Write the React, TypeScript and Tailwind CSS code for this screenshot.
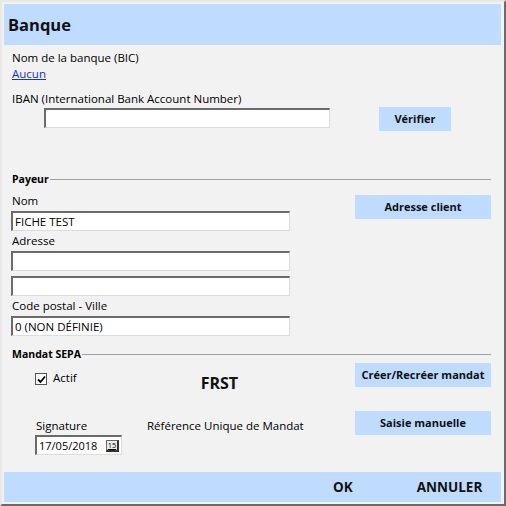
import React from "react";

const inputCls =
  "h-[20px] bg-white border-t-2 border-l-2 border-r border-b border-t-[#6b6b6b] border-l-[#6b6b6b] border-r-[#dcdcdc] border-b-[#dcdcdc] px-[2px] text-[11.5px] leading-[17px] text-black";

function Btn({ children, className = "" }: { children: React.ReactNode; className?: string }) {
  return (
    <div
      className={
        "h-[24px] bg-[#bfdbff] flex items-center justify-center text-[11px] font-bold text-[#111] " +
        className
      }
    >
      {children}
    </div>
  );
}

function GroupTitle({ label }: { label: string }) {
  return (
    <div className="flex items-center h-[14px] pl-[8px] pr-[11px]">
      <span className="text-[10.5px] font-bold text-black leading-[14px]">{label}</span>
      <div className="flex-1 h-px bg-[#a0a0a0] ml-px" />
    </div>
  );
}

export default function App() {
  return (
    <div
      className="w-[506px] h-[506px] bg-[#f2f2f2] border-t-2 border-l-2 border-t-[#e8e8e8] border-l-[#e8e8e8] border-r-2 border-b-2 border-r-[#6a6a6a] border-b-[#6a6a6a] p-[2px] flex flex-col text-black"
      style={{ fontFamily: '"Open Sans", "Noto Sans", sans-serif' }}
    >
      {/* Header */}
      <div className="h-[41px] bg-[#bfdbff] mr-px flex items-center pl-[4px]">
        <span className="text-[16.5px] font-bold text-[#111] mt-[1px]">Banque</span>
      </div>

      {/* Body */}
      <div className="flex-1 flex flex-col">
        <div className="pl-[8px] pt-[5px] text-[11.5px] leading-[16px]">
          <div>Nom de la banque (BIC)</div>
          <div className="text-[#1530d8] underline">Aucun</div>
          <div className="mt-[9px]">IBAN (International Bank Account Number)</div>
        </div>
        <div className="flex items-start">
          <div className={inputCls + " ml-[40px] mt-[1px] w-[286px]"} />
          <Btn className="ml-[49px] w-[72px]">Vérifier</Btn>
        </div>

        <div className="mt-[41px]">
          <GroupTitle label="Payeur" />
        </div>
        <div className="flex mt-[5px]">
          <div className="ml-[7px] w-[279px] flex flex-col text-[11.5px]">
            <div className="h-[20px] leading-[20px] pl-px">Nom</div>
            <div className={inputCls}>FICHE TEST</div>
            <div className="h-[20px] leading-[20px] pl-px">Adresse</div>
            <div className={inputCls} />
            <div className={inputCls + " mt-[5px]"} />
            <div className="h-[20px] leading-[20px] pl-px">Code postal - Ville</div>
            <div className={inputCls}>0 (NON DÉFINIE)</div>
          </div>
          <Btn className="ml-[65px] mt-[4px] w-[136px]">Adresse client</Btn>
        </div>

        <div className="mt-[11px]">
          <GroupTitle label="Mandat SEPA" />
        </div>
        <div className="flex mt-[2px]">
          <div className="w-[351px] flex items-start">
            <div className="ml-[31px] mt-[10px] w-[12px] h-[12px] bg-white border border-[#555] flex items-center justify-center">
              <svg width="9" height="9" viewBox="0 0 9 9">
                <path d="M1 4.5 L3.5 7 L8 1.5" stroke="#000" strokeWidth="1.8" fill="none" />
              </svg>
            </div>
            <span className="ml-[6px] mt-[8px] text-[11.5px] leading-[14px]">Actif</span>
            <span className="ml-[124px] mt-[11px] text-[16px] font-bold leading-[18px] text-[#111]">FRST</span>
          </div>
          <Btn className="w-[136px]">Créer/Recréer mandat</Btn>
        </div>
        <div className="flex mt-[19px]">
          <div className="w-[351px] flex items-start text-[11.5px]">
            <div className="ml-[31px] mt-[7px] flex flex-col">
              <div className="leading-[16px] pl-px">Signature</div>
              <div className={inputCls + " mt-px w-[87px] flex items-center justify-between pr-[2px] text-[11px]"}>
                <span>17/05/2018</span>
                <div className="w-[13px] h-[12px] border border-[#666] border-r-2 border-b-2 border-r-[#333] border-b-[#333] bg-[#ececec] flex items-center justify-center text-[7.5px] leading-[8px] underline">
                  15
                </div>
              </div>
            </div>
            <div className="ml-[25px] mt-[7px] leading-[16px]">Référence Unique de Mandat</div>
          </div>
          <Btn className="w-[136px]">Saisie manuelle</Btn>
        </div>
      </div>

      {/* Footer */}
      <div className="h-[30px] bg-[#bfdbff] mr-px flex items-center">
        <span className="ml-[329px] text-[13.5px] font-bold text-[#111]">OK</span>
        <span className="ml-[64px] text-[13.5px] font-bold text-[#111]">ANNULER</span>
      </div>
    </div>
  );
}
